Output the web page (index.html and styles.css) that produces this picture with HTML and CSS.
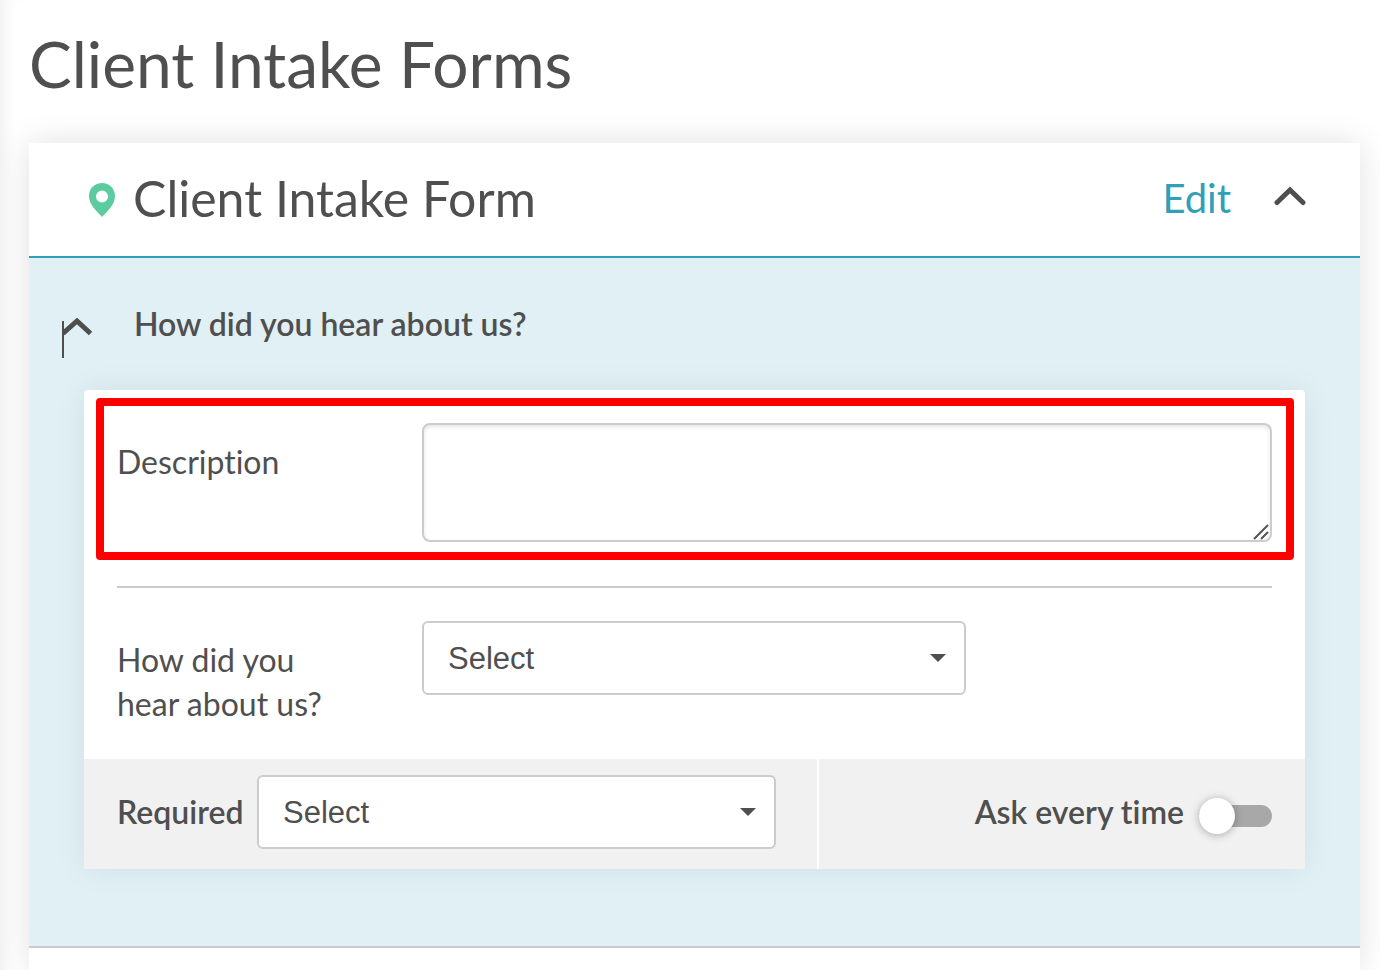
FILE: index.html
```html
<!DOCTYPE html>
<html lang="en">
<head>
  <meta charset="UTF-8" />
  <meta name="viewport" content="width=device-width, initial-scale=1.0"/>
  <title>Client Intake Forms</title>
  <link rel="stylesheet" href="styles.css">
</head>
<body>
  <main>
    <h1>Client Intake Forms</h1>

    <section class="form-card">
      <header class="form-header">
        <svg class="pin" viewBox="0 0 26 34" aria-hidden="true">
          <path fill-rule="evenodd" d="M13 0C5.500 0 0 5.500 0 13c0 8.500 7 14.500 13 21 6-6.500 13-12.500 13-21C26 5.500 20.500 0 13 0zm0 7.500a6 6 0 1 1 0 12 6 6 0 0 1 0-12z"/>
        </svg>
        <h2>Client Intake Form</h2>
        <a href="#edit" class="edit-link">Edit</a>
        <button type="button" class="toggle-btn" aria-label="Collapse form">
          <svg class="chevron" viewBox="0 0 32 24" aria-hidden="true">
            <path d="M3 16.500L16 4l13 12.500"/>
          </svg>
        </button>
      </header>

      <div class="form-body">
        <div class="question">
          <button type="button" class="toggle-btn question-toggle" aria-label="Collapse question">
            <svg class="chevron-bar" viewBox="0 0 30 40" aria-hidden="true">
              <path class="bar" d="M1 3v37"/>
              <path d="M1 15.500L15 3l13.500 12.500"/>
            </svg>
          </button>
          <h3>How did you hear about us?</h3>
        </div>

        <div class="panel">
          <div class="fields">
            <div class="field highlight">
              <label for="description">Description</label>
              <div class="textarea-box">
                <textarea id="description"></textarea>
                <svg class="grip" viewBox="0 0 16 16" aria-hidden="true">
                  <path d="M1 15L15 1M8 15l7-7"/>
                </svg>
              </div>
            </div>
            <hr>
            <div class="field">
              <label for="source">How did you hear about us?</label>
              <div class="select-box source-select">
                <select id="source">
                  <option>Select</option>
                </select>
              </div>
            </div>
          </div>

          <div class="panel-footer">
            <div class="required">
              <label for="required">Required</label>
              <div class="select-box">
                <select id="required">
                  <option>Select</option>
                </select>
              </div>
            </div>
            <div class="ask">
              <label for="ask">Ask every time</label>
              <input type="checkbox" id="ask" class="switch">
            </div>
          </div>
        </div>
      </div>
    </section>
  </main>
</body>
</html>
```
FILE: styles.css
```css
:root {
  --teal: #319fb5;
  --green: #5ccba0;
  --dark: #4f4f4f;
  --border: #cccccc;
  --pale: #e1f0f4;
  --gray: #f1f1f1;
}

* {
  box-sizing: border-box;
  margin: 0;
  padding: 0;
}

body {
  background-color: white;
  color: var(--dark);
  font-family: Lato, "Open Sans", sans-serif;
  font-size: 32px;
  font-variant-ligatures: none;
  line-height: 44px;
}

main {
  display: flex;
  flex-direction: column;
  min-height: 100vh;
  padding: 22px 20px 0 29px;
  box-shadow: inset 16px 0 20px -16px rgba(0, 0, 0, 0.1);
}

h1 {
  font-size: 64px;
  font-weight: 400;
  line-height: 84px;
  margin-bottom: 37px;
}

.form-card {
  flex: 1;
  background: white;
  box-shadow: 0 0 32px rgba(0, 0, 0, 0.12);
}

.form-header {
  display: flex;
  align-items: center;
  height: 115px;
  padding: 0 54px 4px 60px;
  border-bottom: 2px solid var(--teal);
}

.pin {
  width: 26px;
  height: 34px;
  margin: 4px 18px 0 0;
  fill: var(--green);
}

h2 {
  flex: 1;
  font-size: 50px;
  font-weight: 400;
  line-height: 60px;
}

.edit-link {
  color: var(--teal);
  font-size: 40px;
  text-decoration: none;
  margin-right: 43px;
}

.toggle-btn {
  display: flex;
  border: none;
  background: none;
  cursor: pointer;
}

.chevron,
.chevron-bar {
  fill: none;
  stroke: var(--dark);
  stroke-width: 5;
  stroke-linecap: round;
}

.chevron {
  width: 32px;
  height: 24px;
}

.chevron-bar {
  width: 30px;
  height: 40px;
  stroke-linecap: butt;
}

.chevron-bar .bar {
  stroke-width: 2;
}

.form-body {
  background: var(--pale);
  padding: 44px 55px 77px;
  border-bottom: 2px solid var(--border);
}

.question {
  display: flex;
  margin: 0 0 32px -22px;
}

.question-toggle {
  padding-top: 16px;
  margin-right: 42px;
}

h3 {
  font-size: 32px;
  font-weight: 600;
  line-height: 44px;
}

.panel {
  background: white;
  border-radius: 4px 4px 0 0;
  box-shadow: 0 0 32px rgba(0, 0, 0, 0.07);
}

.fields {
  padding: 8px 33px 33px;
}

.field {
  display: grid;
  grid-template-columns: 305px 1fr;
}

.field label {
  width: 240px;
  padding-top: 17px;
}

.highlight {
  margin: 0 -22px 26px -21px;
  padding: 17px 14px 10px 13px;
  border: 8px solid #ff0000;
  border-radius: 4px;
}

.textarea-box {
  position: relative;
  display: flex;
}

textarea {
  width: 100%;
  height: 119px;
  padding: 16px 24px;
  border: 2px solid var(--border);
  border-radius: 8px;
  box-shadow: inset 0 2px 4px rgba(0, 0, 0, 0.1);
  color: var(--dark);
  font: inherit;
  resize: none;
}

.grip {
  position: absolute;
  right: 3px;
  bottom: 2px;
  width: 16px;
  height: 16px;
  stroke: #555555;
  stroke-width: 2;
}

hr {
  border: none;
  border-top: 2px solid var(--border);
  margin-bottom: 33px;
}

.select-box {
  position: relative;
}

.select-box::after {
  content: "";
  position: absolute;
  top: 33px;
  right: 20px;
  border: 8px solid transparent;
  border-top-color: var(--dark);
  border-bottom: none;
  pointer-events: none;
}

.source-select {
  width: 64%;
}

select {
  appearance: none;
  display: block;
  width: 100%;
  height: 74px;
  padding: 0 48px 0 24px;
  border: 2px solid var(--border);
  border-radius: 6px;
  background: white;
  color: var(--dark);
  font-family: "Liberation Sans", Arial, sans-serif;
  font-size: 31px;
}

.panel-footer {
  display: grid;
  grid-template-columns: 60% 1fr;
  gap: 2px;
  font-weight: 600;
}

.required,
.ask {
  display: flex;
  align-items: center;
  height: 110px;
  background: var(--gray);
}

.required {
  padding: 0 41px 4px 33px;
}

.required label {
  width: 140px;
}

.required .select-box {
  flex: 1;
}

.ask {
  justify-content: flex-end;
  gap: 15px;
  padding: 0 33px 0 0;
}

.ask label {
  padding-bottom: 4px;
}

.switch {
  appearance: none;
  position: relative;
  width: 73px;
  height: 22px;
  margin-top: 4px;
  border-radius: 11px;
  background: #a8a8a8;
  cursor: pointer;
}

.switch::before {
  content: "";
  position: absolute;
  top: -7px;
  left: 0;
  width: 36px;
  height: 36px;
  border-radius: 50%;
  background: white;
  box-shadow: 0 1px 8px rgba(0, 0, 0, 0.3);
}

.switch:checked {
  background: var(--teal);
}

.switch:checked::before {
  left: 37px;
}
```
